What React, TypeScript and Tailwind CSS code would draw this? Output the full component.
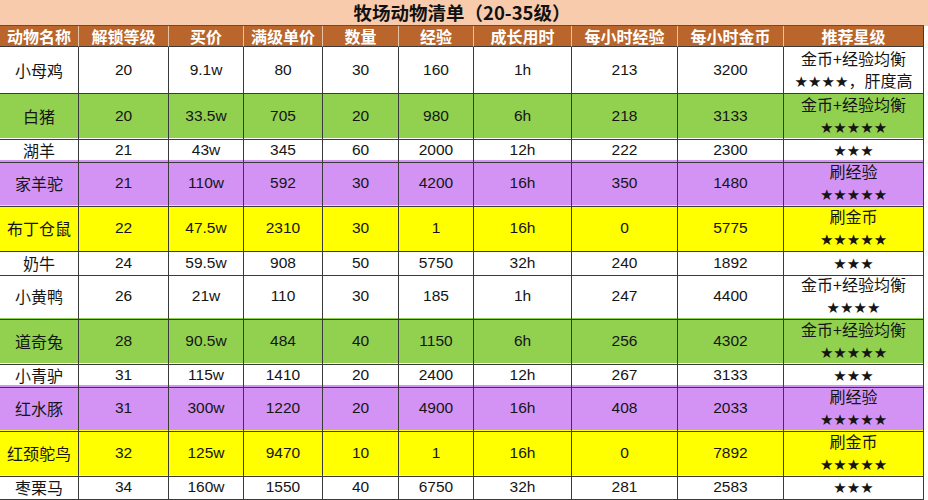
import React from "react";

type Row = {
  name: string;
  lv: string;
  price: string;
  unit: string;
  qty: string;
  exp: string;
  time: string;
  eph: string;
  gph: string;
  rec: [string, string] | [string];
  bg: string;
  h: string;
};

const W = "bg-white";
const G = "bg-[#92d050]";
const P = "bg-[#d393f5]";
const Y = "bg-[#ffff00]";

const rows: Row[] = [
  { name: "小母鸡", lv: "20", price: "9.1w", unit: "80", qty: "30", exp: "160", time: "1h", eph: "213", gph: "3200", rec: ["金币+经验均衡", "★★★★，肝度高"], bg: W, h: "h-[46px]" },
  { name: "白猪", lv: "20", price: "33.5w", unit: "705", qty: "20", exp: "980", time: "6h", eph: "218", gph: "3133", rec: ["金币+经验均衡", "★★★★★"], bg: G, h: "h-[45px]" },
  { name: "湖羊", lv: "21", price: "43w", unit: "345", qty: "60", exp: "2000", time: "12h", eph: "222", gph: "2300", rec: ["★★★"], bg: W, h: "h-[22px]" },
  { name: "家羊驼", lv: "21", price: "110w", unit: "592", qty: "30", exp: "4200", time: "16h", eph: "350", gph: "1480", rec: ["刷经验", "★★★★★"], bg: P, h: "h-[45px]" },
  { name: "布丁仓鼠", lv: "22", price: "47.5w", unit: "2310", qty: "30", exp: "1", time: "16h", eph: "0", gph: "5775", rec: ["刷金币", "★★★★★"], bg: Y, h: "h-[46px]" },
  { name: "奶牛", lv: "24", price: "59.5w", unit: "908", qty: "50", exp: "5750", time: "32h", eph: "240", gph: "1892", rec: ["★★★"], bg: W, h: "h-[22px]" },
  { name: "小黄鸭", lv: "26", price: "21w", unit: "110", qty: "30", exp: "185", time: "1h", eph: "247", gph: "4400", rec: ["金币+经验均衡", "★★★★"], bg: W, h: "h-[45px]" },
  { name: "道奇兔", lv: "28", price: "90.5w", unit: "484", qty: "40", exp: "1150", time: "6h", eph: "256", gph: "4302", rec: ["金币+经验均衡", "★★★★★"], bg: G, h: "h-[45px]" },
  { name: "小青驴", lv: "31", price: "115w", unit: "1410", qty: "20", exp: "2400", time: "12h", eph: "267", gph: "3133", rec: ["★★★"], bg: W, h: "h-[22px]" },
  { name: "红水豚", lv: "31", price: "300w", unit: "1220", qty: "20", exp: "4900", time: "16h", eph: "408", gph: "2033", rec: ["刷经验", "★★★★★"], bg: P, h: "h-[45px]" },
  { name: "红颈鸵鸟", lv: "32", price: "125w", unit: "9470", qty: "10", exp: "1", time: "16h", eph: "0", gph: "7892", rec: ["刷金币", "★★★★★"], bg: Y, h: "h-[45px]" },
  { name: "枣栗马", lv: "34", price: "160w", unit: "1550", qty: "40", exp: "6750", time: "32h", eph: "281", gph: "2583", rec: ["★★★"], bg: W, h: "h-[22px]" },
];

const headers = ["动物名称", "解锁等级", "买价", "满级单价", "数量", "经验", "成长用时", "每小时经验", "每小时金币", "推荐星级"];

const cols = "grid grid-cols-[79px_90px_75px_79px_76px_75px_98px_106px_106px_140px]";

function RecText({ s }: { s: string }) {
  const parts: React.ReactNode[] = [];
  let buf = "";
  let isStar = false;
  let k = 0;
  const flush = () => {
    if (!buf) return;
    parts.push(
      isStar ? (
        <span key={k++} className="font-['DejaVu_Sans'] text-[15px]">
          {buf}
        </span>
      ) : (
        <span key={k++}>{buf}</span>
      )
    );
    buf = "";
  };
  for (const ch of s) {
    const st = ch === "★";
    if (st !== isStar) {
      flush();
      isStar = st;
    }
    buf += ch;
  }
  flush();
  return <div className="leading-[22px]">{parts}</div>;
}

export default function App() {
  const cell = "flex items-center justify-center border-r border-b border-[#3a3a3a] text-center";
  return (
    <div className="w-[928px] h-[500px] bg-white text-[#151515] font-['Liberation_Sans','Noto_Sans_CJK_SC',sans-serif] text-[15.5px] overflow-hidden">
      <div className="h-[26px] w-[928px] bg-[#f8cbad] flex">
        <div className="w-[924px] h-full border-b border-[#6b4a35] flex items-center justify-center font-bold text-[18.5px] text-[#111] font-['Noto_Sans_CJK_SC',sans-serif] pt-[1px]">
          牧场动物清单（20-35级）
        </div>
      </div>
      <div className="w-[924px]">
        <div className={`${cols} h-[21px] bg-[#b9652b]`}>
          {headers.map((h, i) => (
            <div
              key={i}
              className={`flex items-center justify-center border-b border-[#3a3a3a] ${i < headers.length - 1 ? "border-r border-r-[#e6c3a5]" : "border-r border-r-[#3a3a3a]"} text-white font-bold text-[16px] leading-none font-['Noto_Sans_CJK_SC',sans-serif]`}
            >
              {h}
            </div>
          ))}
        </div>
        {rows.map((r, i) => (
          <div key={i} className={`${cols} ${r.h} ${r.bg}`}>
            <div className={`${cell} text-[16px] font-['Noto_Sans_CJK_SC',sans-serif]`}>{r.name}</div>
            <div className={cell}>{r.lv}</div>
            <div className={cell}>{r.price}</div>
            <div className={cell}>{r.unit}</div>
            <div className={cell}>{r.qty}</div>
            <div className={cell}>{r.exp}</div>
            <div className={cell}>{r.time}</div>
            <div className={cell}>{r.eph}</div>
            <div className={cell}>{r.gph}</div>
            <div className={`${cell} flex-col text-[16px] font-['Noto_Sans_CJK_SC',sans-serif]`}>
              {r.rec.map((s, j) => (
                <RecText key={j} s={s} />
              ))}
            </div>
          </div>
        ))}
      </div>
    </div>
  );
}
